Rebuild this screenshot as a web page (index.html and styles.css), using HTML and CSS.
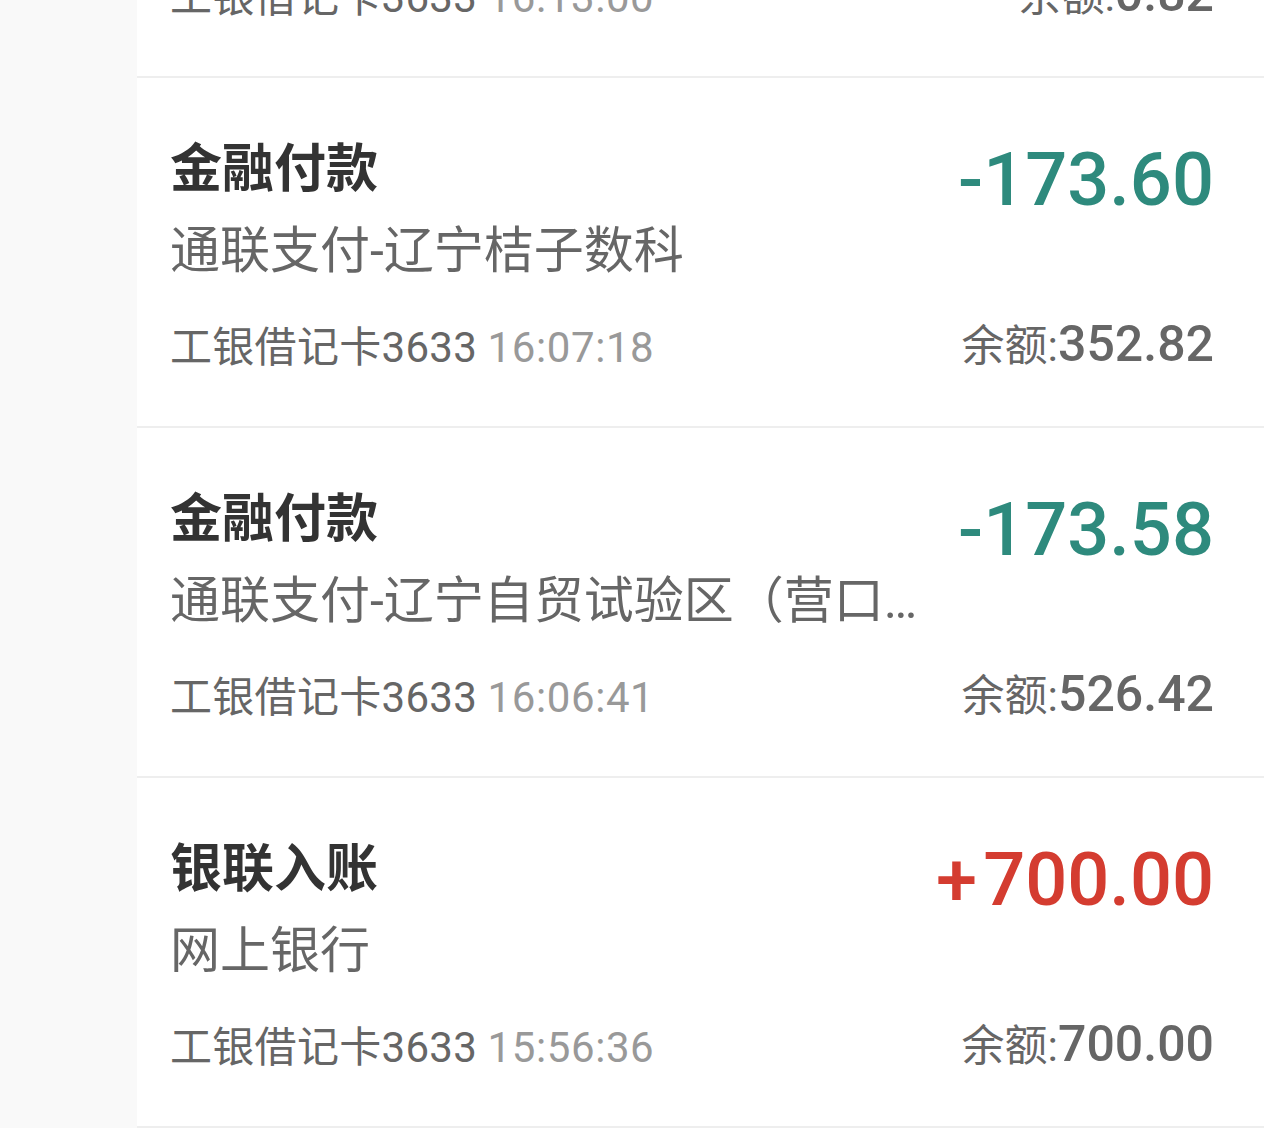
FILE: index.html
```html
<!DOCTYPE html>
<html lang="zh-CN">
<head>
<meta charset="utf-8">
<title>交易明细</title>
<link rel="stylesheet" href="styles.css">
</head>
<body>
<div class="page">
  <aside class="rail"></aside>
  <main class="list">
    <div class="item">
      <div class="left">
        <div class="title">金融付款</div>
        <div class="desc">通联支付-辽宁桔子数科</div>
        <div class="meta"><span class="card">工银借记卡3633</span> <span class="time">16:13:00</span></div>
      </div>
      <div class="right">
        <div class="amount out">-173.62</div>
        <div class="balance"><span class="bl">余额:</span><span class="bv">0.82</span></div>
      </div>
    </div>
    <div class="item">
      <div class="left">
        <div class="title">金融付款</div>
        <div class="desc">通联支付-辽宁桔子数科</div>
        <div class="meta"><span class="card">工银借记卡3633</span> <span class="time">16:07:18</span></div>
      </div>
      <div class="right">
        <div class="amount out">-173.60</div>
        <div class="balance"><span class="bl">余额:</span><span class="bv">352.82</span></div>
      </div>
    </div>
    <div class="item">
      <div class="left">
        <div class="title">金融付款</div>
        <div class="desc">通联支付-辽宁自贸试验区（营口）有限公司</div>
        <div class="meta"><span class="card">工银借记卡3633</span> <span class="time">16:06:41</span></div>
      </div>
      <div class="right">
        <div class="amount out">-173.58</div>
        <div class="balance"><span class="bl">余额:</span><span class="bv">526.42</span></div>
      </div>
    </div>
    <div class="item">
      <div class="left">
        <div class="title">银联入账</div>
        <div class="desc">网上银行</div>
        <div class="meta"><span class="card">工银借记卡3633</span> <span class="time">15:56:36</span></div>
      </div>
      <div class="right">
        <div class="amount in">+700.00</div>
        <div class="balance"><span class="bl">余额:</span><span class="bv">700.00</span></div>
      </div>
    </div>
  </main>
</div>
</body>
</html>
```
FILE: styles.css
```css
html, body {
  margin: 0;
  padding: 0;
  background: #ffffff;
}
body {
  font-family: Roboto, "Noto Sans CJK SC", sans-serif;
  overflow: hidden;
  height: 1128px;
}
.page {
  display: flex;
  height: 1128px;
}
.rail {
  width: 137px;
  flex: none;
  background: #f9f9f9;
}
.list {
  flex: 1;
  margin-top: -272px;
  background: #ffffff;
}
.item {
  display: flex;
  justify-content: space-between;
  padding: 0 50px 0 33px;
  height: 348px;
  border-bottom: 2px solid #eeeeee;
}
.left {
  display: flex;
  flex-direction: column;
  min-width: 0;
  padding-top: 57px;
}
.title {
  font-family: "Noto Sans CJK SC", sans-serif;
  font-size: 52px;
  line-height: 60px;
  font-weight: 700;
  color: #333333;
}
.desc {
  margin-top: 26px;
  font-size: 50px;
  line-height: 60px;
  color: #666666;
  max-width: 768px;
  white-space: nowrap;
  overflow: hidden;
  text-overflow: ellipsis;
}
.meta {
  margin-top: 42px;
  font-size: 42px;
  line-height: 50px;
  color: #666666;
  white-space: nowrap;
}
.card {
  letter-spacing: 0.3px;
}
.time {
  color: #999999;
  letter-spacing: 0.6px;
}
.right {
  display: flex;
  flex-direction: column;
  align-items: flex-end;
  padding-top: 62px;
}
.amount {
  font-size: 74px;
  line-height: 80px;
  font-weight: 500;
}
.amount.out { color: #2e8a7d; }
.amount.in { color: #d43c30; }
.amount.in::first-letter {
  letter-spacing: 6px;
}
.balance {
  margin-top: 99px;
  line-height: 50px;
  color: #666666;
  white-space: nowrap;
}
.bl {
  font-size: 43px;
}
.bv {
  font-size: 50px;
  font-weight: 500;
}
```
